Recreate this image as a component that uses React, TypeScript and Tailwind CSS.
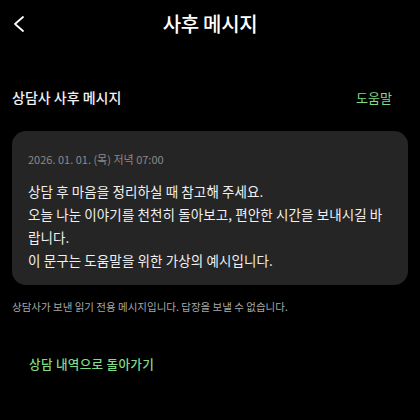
export default function App() {
  return (
    <div
      className="w-[420px] h-[420px] bg-black text-white overflow-hidden"
      style={{ fontFamily: '"Noto Sans CJK KR", "Noto Sans", sans-serif' }}
    >
      <header className="relative h-[48px] flex items-center justify-center">
        <button className="absolute left-[11px] top-[14px] w-[16px] h-[20px] flex items-center justify-center">
          <svg width="12" height="18" viewBox="0 0 12 18" fill="none">
            <path d="M10 2L2 9L10 16" stroke="white" strokeWidth="1.8" strokeLinecap="round" strokeLinejoin="round" />
          </svg>
        </button>
        <h1 className="text-[20px] font-medium leading-none tracking-[-0.3px]">사후 메시지</h1>
      </header>

      <div className="flex items-center justify-between px-[12px] mt-[39px]">
        <span className="text-[14px] font-medium text-[#f2f2f2]">상담사 사후 메시지</span>
        <span className="text-[13px] text-[#7fdc85] mr-[16px]">도움말</span>
      </div>

      <div className="mx-[12px] mt-[23px] rounded-[14px] bg-[#252525] pl-[16px] pr-[20px] pt-[20px] pb-[13px]">
        <div className="text-[11px] text-[#8a8a8a] leading-[16px]">2026. 01. 01. (목) 저녁 07:00</div>
        <p className="mt-[13px] text-[13.5px] leading-[23px] text-[#f0f0f0] tracking-[0.1px]">
          상담 후 마음을 정리하실 때 참고해 주세요.
          <br />
          오늘 나눈 이야기를 천천히 돌아보고, 편안한 시간을 보내시길 바랍니다.
          <br />
          이 문구는 도움말을 위한 가상의 예시입니다.
        </p>
      </div>

      <p className="px-[12px] mt-[15px] text-[10.5px] text-[#a8a8a8] leading-[14px]">
        상담사가 보낸 읽기 전용 메시지입니다. 답장을 보낼 수 없습니다.
      </p>

      <div className="px-[29px] mt-[36px]">
        <span className="text-[12.6px] font-medium text-[#7fdc85] tracking-[0.3px]">상담 내역으로 돌아가기</span>
      </div>
    </div>
  );
}
